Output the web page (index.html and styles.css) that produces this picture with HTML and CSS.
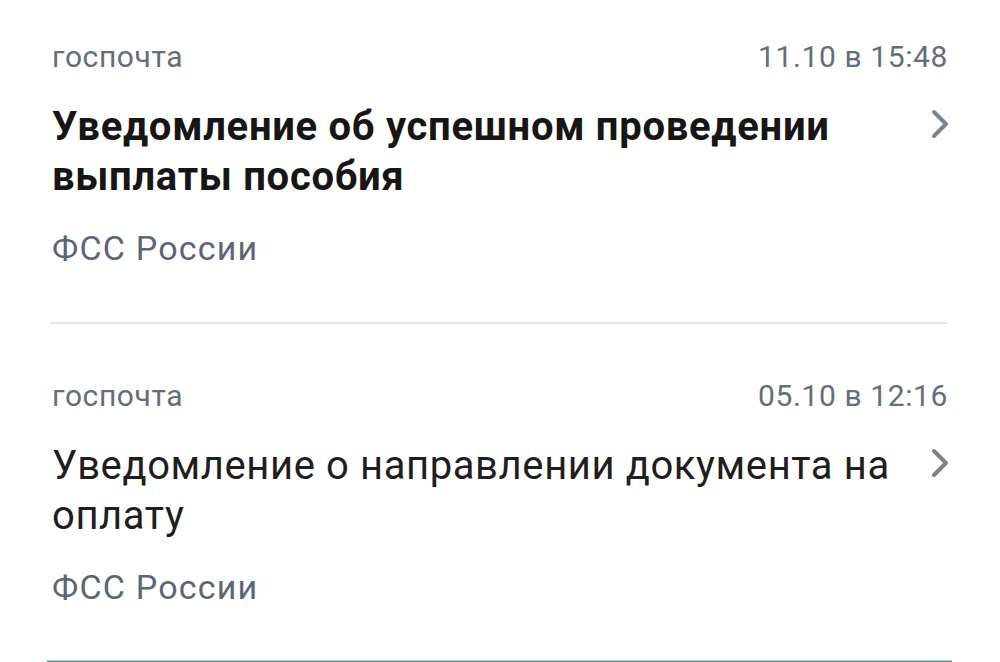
FILE: index.html
```html
<!DOCTYPE html>
<html lang="ru">
<head>
<meta charset="utf-8">
<link rel="stylesheet" href="styles.css">
</head>
<body>
<div class="list">
  <div class="item">
    <div class="meta"><span>госпочта</span><span>11.10 в 15:48</span></div>
    <div class="row">
      <div class="title bold">Уведомление об успешном проведении выплаты пособия</div>
      <svg class="chev" width="18" height="30" viewBox="0 0 18 30"><path d="M3 3 L15 15 L3 27" fill="none" stroke="#7b8291" stroke-width="4" stroke-linecap="round" stroke-linejoin="round"/></svg>
    </div>
    <div class="org">ФСС России</div>
  </div>
  <div class="sep"></div>
  <div class="item">
    <div class="meta"><span>госпочта</span><span>05.10 в 12:16</span></div>
    <div class="row">
      <div class="title">Уведомление о направлении документа на оплату</div>
      <svg class="chev" width="18" height="30" viewBox="0 0 18 30"><path d="M3 3 L15 15 L3 27" fill="none" stroke="#7b8291" stroke-width="4" stroke-linecap="round" stroke-linejoin="round"/></svg>
    </div>
    <div class="org">ФСС России</div>
  </div>
  <div class="bar"></div>
</div>
</body>
</html>
```
FILE: styles.css
```css
html, body {
  margin: 0;
  padding: 0;
  background: #fff;
  width: 1000px;
  height: 662px;
  overflow: hidden;
}
body {
  font-family: Roboto, "Noto Sans", sans-serif;
}
.list {
  padding: 0 52px;
  display: flex;
  flex-direction: column;
}
.item {
  display: flex;
  flex-direction: column;
  padding-top: 52px;
}
.item:first-child {
  padding-top: 37px;
}
.meta {
  display: flex;
  justify-content: space-between;
  font-size: 30px;
  line-height: 40px;
  letter-spacing: 0.6px;
  color: #646d7c;
}
.row {
  display: flex;
  align-items: flex-start;
  justify-content: space-between;
  gap: 20px;
  margin-top: 25px;
}
.title {
  font-size: 40px;
  line-height: 50px;
  letter-spacing: 0.6px;
  color: #1e1e1e;
}
.title.bold {
  font-weight: 700;
  letter-spacing: 0.7px;
  color: #161616;
}
.chev {
  flex: none;
  margin-top: 7px;
  margin-right: -1px;
}
.org {
  margin-top: 26px;
  font-size: 34px;
  line-height: 40px;
  letter-spacing: 1.2px;
  color: #5b6577;
}
.sep {
  margin-top: 54px;
  height: 2px;
  background: #e6e6e6;
  margin-left: -2px;
}
.bar {
  margin-top: 53px;
  height: 4px;
  background: #5b9686;
  border-top: 1px solid #a9d6c8;
  margin-left: -5px;
  margin-right: -4px;
}
```
